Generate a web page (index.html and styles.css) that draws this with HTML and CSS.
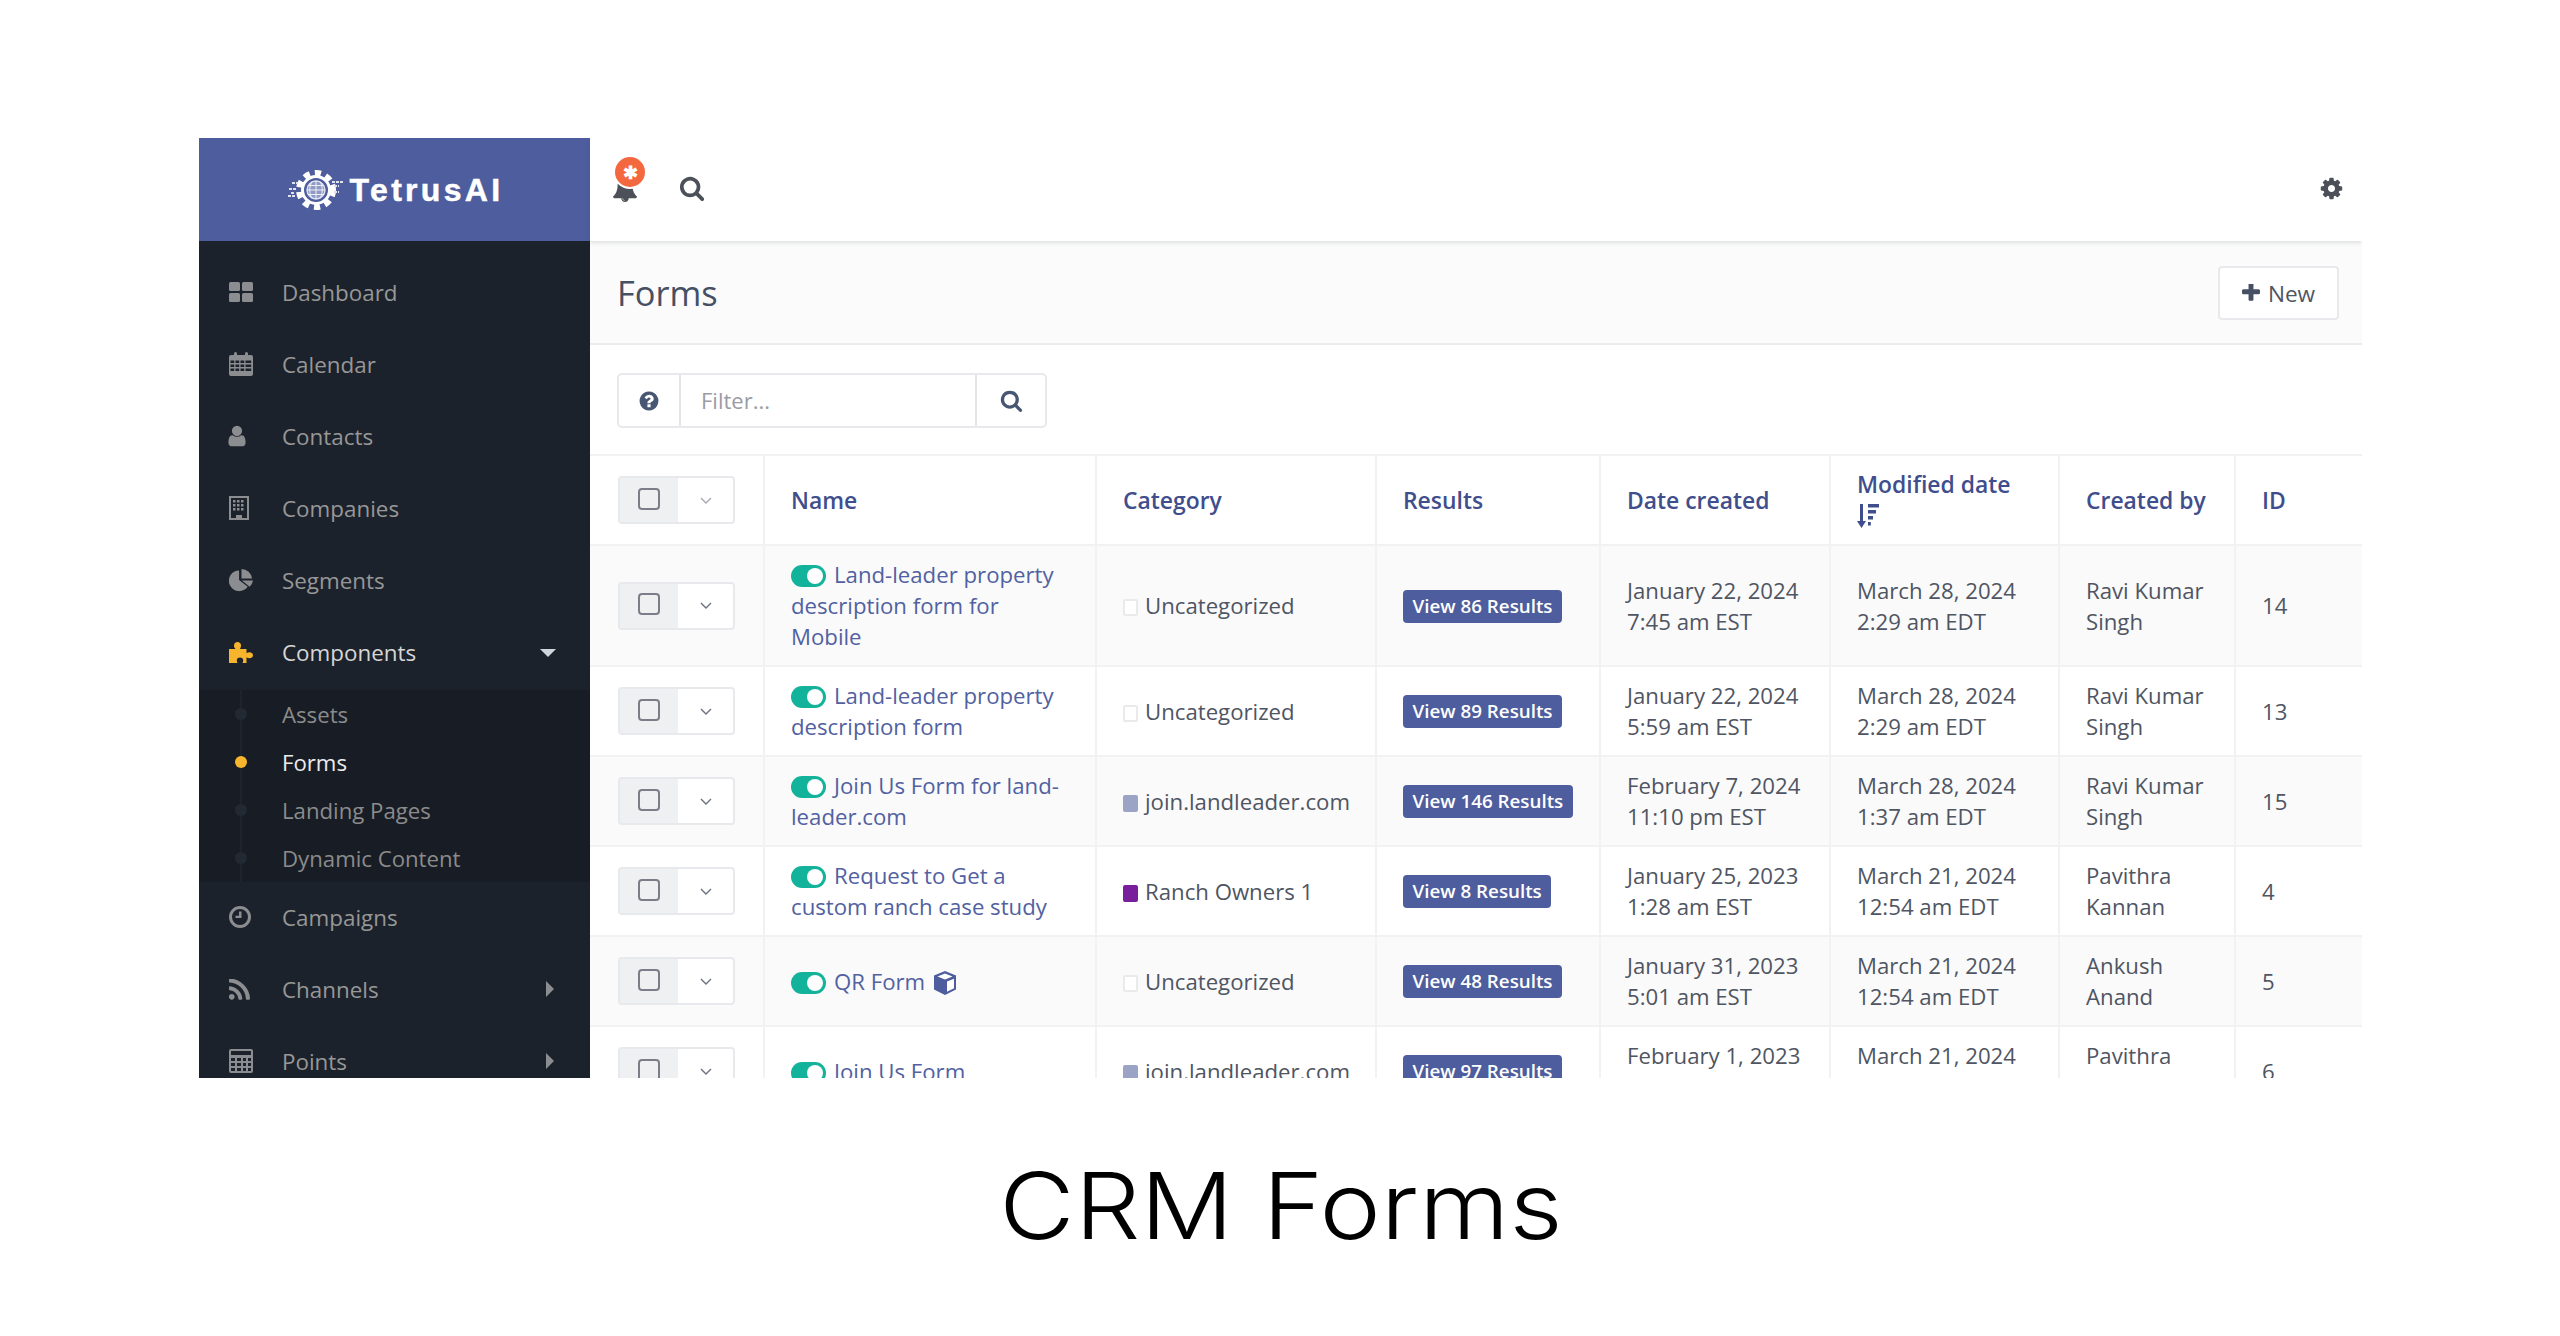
FILE: index.html
```html
<!DOCTYPE html>
<html lang="en">
<head>
<meta charset="utf-8">
<title>CRM Forms</title>
<link rel="stylesheet" href="styles.css">
</head>
<body>
<svg class="sprite" aria-hidden="true">
  <symbol id="i-search" viewBox="0 0 1792 1792"><path d="M1216 832q0-185-131.500-316.500t-316.500-131.500-316.500 131.500-131.500 316.500 131.500 316.500 316.500 131.500 316.500-131.500 131.500-316.500zm512 832q0 52-38 90t-90 38q-54 0-90-38l-343-342q-179 124-399 124-143 0-273.500-55.500t-225-150-150-225-55.500-273.500 55.500-273.500 150-225 225-150 273.500-55.500 273.500 55.500 225 150 150 225 55.500 273.500q0 220-124 399l343 343q37 37 37 90z"/></symbol>
  <symbol id="i-cog" viewBox="0 0 1792 1792"><path d="M1152 896q0-106-75-181t-181-75-181 75-75 181 75 181 181 75 181-75 75-181zm512-109v222q0 12-8 23t-20 13l-185 28q-19 54-39 91 35 50 107 138 10 12 10 25t-9 23q-27 37-99 108t-94 71q-12 0-26-9l-138-108q-44 23-91 38-16 136-29 186-7 28-36 28h-222q-14 0-24.500-8.500t-11.500-21.500l-28-184q-49-16-90-37l-141 107q-10 9-25 9-14 0-25-11-126-114-165-168-7-10-7-23 0-12 8-23 15-21 51-66.500t54-70.500q-27-50-41-99l-183-27q-13-2-21-12.500t-8-23.500v-222q0-12 8-23t19-13l186-28q14-46 39-92-40-57-107-138-10-12-10-24 0-10 9-23 26-36 98.500-107.500t94.500-71.500q13 0 26 10l138 107q44-23 91-38 16-136 29-186 7-28 36-28h222q14 0 24.500 8.500t11.500 21.500l28 184q49 16 90 37l142-107q9-9 24-9 13 0 25 10 129 119 165 170 7 8 7 22 0 12-8 23-15 21-51 66.500t-54 70.500q26 50 41 98l183 28q13 2 21 12.500t8 23.500z"/></symbol>
  <symbol id="i-help" viewBox="0 0 1792 1792"><path d="M1024 1376v-192q0-14-9-23t-23-9h-192q-14 0-23 9t-9 23v192q0 14 9 23t23 9h192q14 0 23-9t9-23zm256-672q0-88-55.500-163t-138.500-116-170-41q-243 0-371 213-15 24 8 42l132 100q7 6 19 6 16 0 25-12 53-68 86-92 34-24 86-24 48 0 85.500 26t37.500 59q0 38-20 61t-68 45q-63 28-115.500 86.500t-52.500 125.500v36q0 14 9 23t23 9h192q14 0 23-9t9-23q0-19 21.500-49.500t54.500-49.500q32-18 49-28.500t46-35 44.500-48 28-60.500 12.500-81zm384 192q0 209-103 385.500t-279.500 279.500-385.500 103-385.500-103-279.500-279.500-103-385.500 103-385.500 279.500-279.500 385.500-103 385.500 103 279.500 279.500 103 385.500z"/></symbol>
  <symbol id="i-dash" viewBox="0 0 24 20"><rect x="0" y="0" width="11" height="9" rx="1.500"/><rect x="13" y="0" width="11" height="9" rx="1.500"/><rect x="0" y="11" width="11" height="9" rx="1.500"/><rect x="13" y="11" width="11" height="9" rx="1.500"/></symbol>
  <symbol id="i-cal" viewBox="0 0 24 24"><path fill-rule="evenodd" d="M2 3h3V1.500a1.500 1.500 0 0 1 3 0V3h8V1.500a1.500 1.500 0 0 1 3 0V3h3a2 2 0 0 1 2 2v17a2 2 0 0 1-2 2H2a2 2 0 0 1-2-2V5a2 2 0 0 1 2-2zM1.500 8.500V11h3.700V8.500zm5 0V11h3.700V8.500zm5 0V11h3.700V8.500zm5 0V11h5.700V8.500zM1.500 12.500V15h3.700v-2.500zm5 0V15h3.700v-2.500zm5 0V15h3.700v-2.500zm5 0V15h5.700v-2.500zM1.500 16.500V19h3.700v-2.500zm5 0V19h3.700v-2.500zm5 0V19h3.700v-2.500zm5 0V19h5.700v-2.500z"/></symbol>
  <symbol id="i-user" viewBox="0 0 1792 1792"><path d="M1536 1399q0 109-62.500 187t-150.500 78h-854q-88 0-150.500-78t-62.500-187q0-85 8.500-160.500t31.500-152 58.500-131 94-89 134.500-34.500q131 128 313 128t313-128q76 0 134.500 34.500t94 89 58.500 131 31.500 152 8.500 160.500zm-256-887q0 159-112.500 271.500t-271.500 112.500-271.500-112.500-112.500-271.500 112.500-271.500 271.500-112.500 271.500 112.500 112.500 271.500z"/></symbol>
  <symbol id="i-build" viewBox="0 0 20 24"><path fill-rule="evenodd" d="M0 0h20v24H0zM2 2v20h5v-3h6v3h5V2zM4 4h2.500v2.500H4zm4 0h2.500v2.500H8zm4 0h2.500v2.500H12zM4 8h2.500v2.500H4zm4 0h2.500v2.500H8zm4 0h2.500v2.500H12zM4 12h2.500v2.500H4zm4 0h2.500v2.500H8zm4 0h2.500v2.500H12z"/></symbol>
  <symbol id="i-pie" viewBox="0 0 25 23"><path d="M10.500 1.500A10.800 10.800 0 1 0 19.500 18.500L10.500 11.500z"/><path d="M13 0a11 11 0 0 1 11 10H13z"/><path d="M13.500 12H25a11 11 0 0 1-3.600 6.500z"/></symbol>
  <symbol id="i-puzzle" viewBox="0 0 24 22"><path d="M0 7h6.500C5 5 5 4.500 5 3.500 5 1.500 6.500 0 8.500 0S12 1.500 12 3.500c0 1-.3 1.800-1 3.500h6.500v4.200c1-.7 1.700-1 2.800-1 2 0 3.700 1 3.700 3s-1.700 3-3.700 3c-1.100 0-1.800-.3-2.800-1V21h-4c.4-1 .7-1.600.7-2.700 0-1.800-1.400-2.800-3.200-2.800s-3.200 1-3.200 2.800c0 1.100.3 1.700.7 2.700H0z"/></symbol>
  <symbol id="i-clock" viewBox="0 0 22 22"><path fill-rule="evenodd" d="M11 0a11 11 0 1 1 0 22 11 11 0 0 1 0-22zm0 3a8 8 0 1 0 0 16 8 8 0 0 0 0-16zM10 5.500h2.500V12H6.500V9.800H10z"/></symbol>
  <symbol id="i-rss" viewBox="200 180 1400 1360"><path d="M576 1344q0 80-56 136t-136 56-136-56-56-136 56-136 136-56 136 56 56 136zm512 123q2 28-17 48-18 21-47 21h-135q-25 0-43-16.500t-20-41.500q-22-229-184.500-391.500t-391.500-184.500q-25-2-41.500-20t-16.500-43v-135q0-29 21-47 17-17 43-17h5q160 13 306 80.500t259 181.500q114 113 181.500 259t80.500 306zm512 2q2 27-18 47-18 20-46 20h-143q-26 0-44.500-17.500t-19.500-42.500q-12-215-101-408.500t-231.500-336-336-231.500-408.500-102q-25-1-42.500-19.500t-17.500-43.500v-143q0-28 20-46 18-18 44-18h3q262 13 501.500 120t425.500 294q187 186 294 425.500t120 501.500z"/></symbol>
  <symbol id="i-calc" viewBox="0 0 24 24"><path fill-rule="evenodd" d="M2 0h20a2 2 0 0 1 2 2v20a2 2 0 0 1-2 2H2a2 2 0 0 1-2-2V2a2 2 0 0 1 2-2zm0 2v4h20V2zm0 7v3h4V9zm6 0v3h4V9zm6 0v3h3V9zm5 0v3h3V9zM2 14v3h4v-3zm6 0v3h4v-3zm6 0v3h3v-3zm5 0v3h3v-3zM2 19v3h4v-3zm6 0v3h4v-3zm6 0v3h3v-3zm5 0v3h3v-3z"/></symbol>
  <symbol id="i-plus" viewBox="192 224 1408 1408"><path d="M1600 736v192q0 40-28 68t-68 28h-416v416q0 40-28 68t-68 28h-192q-40 0-68-28t-28-68v-416h-416q-40 0-68-28t-28-68v-192q0-40 28-68t68-28h416v-416q0-40 28-68t68-28h192q40 0 68 28t28 68v416h416q40 0 68 28t28 68z"/></symbol>
  <symbol id="i-bell" viewBox="64 128 1664 1664"><path d="M912 1696q0-16-16-16-59 0-101.500-42.500t-42.500-101.500q0-16-16-16t-16 16q0 73 51.500 124.500t124.500 51.500q16 0 16-16zm816-288q0 52-38 90t-90 38h-448q0 106-75 181t-181 75-181-75-75-181h-448q-52 0-90-38t-38-90q50-42 91-88t85-119.500 74.500-158.500 50-206 19.500-260q0-152 117-282.500t307-158.500q-8-19-8-39 0-40 28-68t68-28 68 28 28 68q0 20-8 39 190 28 307 158.500t117 282.500q0 139 19.500 260t50 206 74.500 158.500 85 119.500 91 88z"/></symbol>
  <symbol id="i-chev" viewBox="0 0 12 7"><path d="M1 1l5 5 5-5" fill="none" stroke="currentColor" stroke-width="1.400"/></symbol>
  <symbol id="i-cube" viewBox="0 0 22 24"><path d="M11 0l11 4.500v14L11 24 0 18.500v-14z"/><path d="M11 2.500l7.500 3L11 8.600 3.500 5.500zM13 10.500l7-2.800v9.500l-7 3.500z" fill="#fff"/></symbol>
  <symbol id="i-sort" viewBox="0 0 22 24"><path d="M3 0h3v17h3l-4.500 7L0 17h3zM11 0h11v3.500H11zM11 6h8v3.500h-8zM11 12h5v3.500h-5zM11 18h2.800v3.500H11z"/></symbol>
</svg>

<main class="shot">
  <div class="app">
    <aside class="sidebar">
      <div class="brand">
        <svg class="brand-mark" viewBox="0 0 56 40" aria-hidden="true">
          <circle class="gear-teeth" cx="28" cy="20" r="17"/>
          <circle class="gear-ring" cx="28" cy="20" r="13.500"/>
          <circle class="globe" cx="28" cy="20" r="9"/>
          <path class="globe-lines" d="M19 20h18M20 15.500h16M20 24.500h16M28 11v18M24 11.500c-3 5-3 12 0 17M32 11.500c3 5 3 12 0 17"/>
          <path class="streaks" d="M1 19h8M4 13h6M0 26h7M3 23h4M44 12h11M46 16h5M46 22h5"/>
        </svg>
        <span class="brand-name">TetrusAI</span>
      </div>
      <nav class="nav">
        <a class="nav-item"><span class="nav-ico"><svg class="ico-dash"><use href="#i-dash"/></svg></span>Dashboard</a>
        <a class="nav-item"><span class="nav-ico"><svg class="ico-24"><use href="#i-cal"/></svg></span>Calendar</a>
        <a class="nav-item"><span class="nav-ico"><svg class="ico-user"><use href="#i-user"/></svg></span>Contacts</a>
        <a class="nav-item"><span class="nav-ico"><svg class="ico-build"><use href="#i-build"/></svg></span>Companies</a>
        <a class="nav-item"><span class="nav-ico"><svg class="ico-24"><use href="#i-pie"/></svg></span>Segments</a>
        <a class="nav-item is-open"><span class="nav-ico"><svg class="ico-24"><use href="#i-puzzle"/></svg></span>Components<span class="caret-down"></span></a>
        <div class="subnav">
          <a class="sub-item"><span class="dot"></span>Assets</a>
          <a class="sub-item is-active"><span class="dot"></span>Forms</a>
          <a class="sub-item"><span class="dot"></span>Landing Pages</a>
          <a class="sub-item"><span class="dot"></span>Dynamic Content</a>
        </div>
        <a class="nav-item"><span class="nav-ico"><svg class="ico-22"><use href="#i-clock"/></svg></span>Campaigns</a>
        <a class="nav-item"><span class="nav-ico"><svg class="ico-rss"><use href="#i-rss"/></svg></span>Channels<span class="caret-right"></span></a>
        <a class="nav-item"><span class="nav-ico"><svg class="ico-24"><use href="#i-calc"/></svg></span>Points<span class="caret-right"></span></a>
      </nav>
    </aside>

    <section class="main">
      <header class="topbar">
        <span class="bell">
          <svg class="ico-bell"><use href="#i-bell"/></svg>
          <span class="badge">✱</span>
        </span>
        <svg class="ico-top-search"><use href="#i-search"/></svg>
        <svg class="ico-gear"><use href="#i-cog"/></svg>
      </header>
      <div class="pagehead">
        <h1 class="title">Forms</h1>
        <button class="btn-new"><svg class="ico-plus"><use href="#i-plus"/></svg>New</button>
      </div>
      <div class="filterbar">
        <div class="filter">
          <span class="filter-addon help"><svg class="ico-help"><use href="#i-help"/></svg></span>
          <span class="filter-input">Filter...</span>
          <span class="filter-addon go"><svg class="ico-search"><use href="#i-search"/></svg></span>
        </div>
      </div>
      <table class="grid">
        <colgroup>
          <col class="c-check"><col class="c-name"><col class="c-cat"><col class="c-res"><col class="c-date"><col class="c-mod"><col class="c-by"><col class="c-id">
        </colgroup>
        <thead>
          <tr>
            <th class="check-cell"><span class="check-group head"><span class="check-box"><i></i></span><span class="check-menu"><svg class="ico-chev"><use href="#i-chev"/></svg></span></span></th>
            <th>Name</th>
            <th>Category</th>
            <th>Results</th>
            <th>Date created</th>
            <th>Modified date<svg class="ico-sort"><use href="#i-sort"/></svg></th>
            <th>Created by</th>
            <th>ID</th>
          </tr>
        </thead>
        <tbody>
          <tr>
            <td class="check-cell"><span class="check-group"><span class="check-box"><i></i></span><span class="check-menu"><svg class="ico-chev"><use href="#i-chev"/></svg></span></span></td>
            <td><span class="toggle"></span><a class="link">Land-leader property description form for Mobile</a></td>
            <td class="cat"><span class="swatch"></span>Uncategorized</td>
            <td><a class="results">View 86 Results</a></td>
            <td class="when">January 22, 2024<br>7:45 am EST</td>
            <td class="when">March 28, 2024<br>2:29 am EDT</td>
            <td>Ravi Kumar Singh</td>
            <td>14</td>
          </tr>
          <tr>
            <td class="check-cell"><span class="check-group"><span class="check-box"><i></i></span><span class="check-menu"><svg class="ico-chev"><use href="#i-chev"/></svg></span></span></td>
            <td><span class="toggle"></span><a class="link">Land-leader property description form</a></td>
            <td class="cat"><span class="swatch"></span>Uncategorized</td>
            <td><a class="results">View 89 Results</a></td>
            <td class="when">January 22, 2024<br>5:59 am EST</td>
            <td class="when">March 28, 2024<br>2:29 am EDT</td>
            <td>Ravi Kumar Singh</td>
            <td>13</td>
          </tr>
          <tr>
            <td class="check-cell"><span class="check-group"><span class="check-box"><i></i></span><span class="check-menu"><svg class="ico-chev"><use href="#i-chev"/></svg></span></span></td>
            <td><span class="toggle"></span><a class="link">Join Us Form for land-leader.com</a></td>
            <td class="cat"><span class="swatch join"></span>join.landleader.com</td>
            <td><a class="results">View 146 Results</a></td>
            <td class="when">February 7, 2024<br>11:10 pm EST</td>
            <td class="when">March 28, 2024<br>1:37 am EDT</td>
            <td>Ravi Kumar Singh</td>
            <td>15</td>
          </tr>
          <tr>
            <td class="check-cell"><span class="check-group"><span class="check-box"><i></i></span><span class="check-menu"><svg class="ico-chev"><use href="#i-chev"/></svg></span></span></td>
            <td><span class="toggle"></span><a class="link">Request to Get a custom ranch case study</a></td>
            <td class="cat"><span class="swatch ranch"></span>Ranch Owners 1</td>
            <td><a class="results">View 8 Results</a></td>
            <td class="when">January 25, 2023<br>1:28 am EST</td>
            <td class="when">March 21, 2024<br>12:54 am EDT</td>
            <td>Pavithra Kannan</td>
            <td>4</td>
          </tr>
          <tr>
            <td class="check-cell"><span class="check-group"><span class="check-box"><i></i></span><span class="check-menu"><svg class="ico-chev"><use href="#i-chev"/></svg></span></span></td>
            <td><span class="toggle"></span><a class="link">QR Form</a><svg class="ico-cube"><use href="#i-cube"/></svg></td>
            <td class="cat"><span class="swatch"></span>Uncategorized</td>
            <td><a class="results">View 48 Results</a></td>
            <td class="when">January 31, 2023<br>5:01 am EST</td>
            <td class="when">March 21, 2024<br>12:54 am EDT</td>
            <td>Ankush Anand</td>
            <td>5</td>
          </tr>
          <tr>
            <td class="check-cell"><span class="check-group"><span class="check-box"><i></i></span><span class="check-menu"><svg class="ico-chev"><use href="#i-chev"/></svg></span></span></td>
            <td><span class="toggle"></span><a class="link">Join Us Form</a></td>
            <td class="cat"><span class="swatch join"></span>join.landleader.com</td>
            <td><a class="results">View 97 Results</a></td>
            <td class="when">February 1, 2023<br>&nbsp;</td>
            <td class="when">March 21, 2024<br>&nbsp;</td>
            <td>Pavithra Kannan</td>
            <td>6</td>
          </tr>
        </tbody>
      </table>
    </section>
  </div>
  <h2 class="caption">CRM Forms</h2>
</main>
</body>
</html>
```

FILE: styles.css
```css
* { box-sizing: border-box; }
html, body { margin: 0; padding: 0; background: #fff; }
body { width: 2560px; height: 1336px; overflow: hidden; font-family: "Open Sans", "Liberation Sans", sans-serif; }
.sprite { display: none; }
svg { fill: currentColor; display: inline-block; }

.shot { padding: 138px 198px 0 199px; }
.app { display: grid; grid-template-columns: 391px 1772px; height: 940px; overflow: hidden; background: #fff; }

/* sidebar */
.sidebar { background: #1c222b; color: #979797; font-size: 22.4px; }
.brand { height: 103px; background: #4e5d9d; display: flex; align-items: center; justify-content: center; gap: 6px; padding-left: 2px; }
.brand-mark { width: 56px; height: 40px; fill: none; color: #fff; }
.gear-teeth { stroke: #fff; stroke-width: 6; stroke-dasharray: 6.200 5; }
.gear-ring { stroke: #fff; stroke-width: 3; }
.globe { stroke: #dfe3f0; stroke-width: 1.400; fill: #8f9ac6; }
.globe-lines { stroke: #eef0f7; stroke-width: 1; }
.streaks { stroke: #dfe3f0; stroke-width: 1.800; stroke-dasharray: 3 1; }
.brand-name { color: #fff; font-family: "Liberation Sans", Arial, sans-serif; font-weight: 700; font-size: 32px; letter-spacing: 3.300px; line-height: 1; -webkit-text-stroke: .5px #fff; }

.nav { padding-top: 16px; display: flex; flex-direction: column; }
.nav-item { height: 72px; display: flex; align-items: center; padding: 0 34px 2px 30px; color: #979797; }
.nav-ico { width: 24px; margin-right: 29px; display: flex; align-items: center; color: #8b8d91; flex: none; }
.is-open { color: #d6d6d6; height: 73px; }
.is-open .nav-ico { color: #f6b52d; }
.ico-dash { width: 24px; height: 20px; }
.ico-24 { width: 24px; height: 24px; }
.ico-22 { width: 22px; height: 22px; }
.ico-user { width: 24px; height: 24px; margin-left: -4px; }
.ico-build { width: 20px; height: 24px; }
.ico-rss { width: 21px; height: 21px; }
.caret-down { margin-left: auto; width: 0; height: 0; border-left: 8px solid transparent; border-right: 8px solid transparent; border-top: 8px solid #d0d4dc; }
.caret-right { margin-left: auto; margin-right: 2px; width: 0; height: 0; border-top: 8px solid transparent; border-bottom: 8px solid transparent; border-left: 8px solid #8b8d91; }

.subnav { position: relative; background: #181d25; height: 192px; display: flex; flex-direction: column; }
.subnav::before { content: ""; position: absolute; left: 41px; top: 0; bottom: 0; width: 2px; background: #1e242d; }
.sub-item { position: relative; height: 48px; display: flex; align-items: center; padding-left: 36px; color: #8b8b8b; font-size: 22.2px; }
.dot { width: 12px; height: 12px; border-radius: 50%; background: #232933; margin-right: 35px; flex: none; }
.is-active { color: #ececec; }
.is-active .dot { background: #f6b52d; }

/* top bar */
.main { min-width: 0; color: #4f5562; font-size: 22.2px; }
.topbar { position: relative; z-index: 1; height: 103px; display: flex; align-items: center; padding: 0 18px 0 22px; background: #fff; box-shadow: 0 2px 4px rgba(60, 65, 75, .14); color: #4c5058; }
.bell { position: relative; display: block; width: 26px; height: 24px; }
.ico-bell { width: 26px; height: 24px; display: block; }
.badge { position: absolute; left: 3px; top: -21px; width: 30px; height: 30px; border-radius: 50%; background: #f4683f; color: #fff; font-size: 18px; font-weight: 700; line-height: 30px; text-align: center; box-shadow: 0 0 0 2px #fff; }
.ico-top-search { width: 26px; height: 26px; margin: -4px 0 0 41px; }
.ico-gear { width: 25px; height: 25px; margin: -3px 0 0 auto; }

/* page head */
.pagehead { height: 104px; display: flex; align-items: center; justify-content: space-between; padding: 2px 23px 0 27px; background: #fbfbfb; border-bottom: 2px solid #ebecee; }
.title { margin: 0 0 2px; font-size: 34.4px; font-weight: 400; color: #465065; }
.btn-new { height: 54px; width: 121px; display: flex; align-items: center; justify-content: center; gap: 8px; background: #fff; border: 2px solid #e8e9ec; border-radius: 4px; font: 400 22.6px "Open Sans", sans-serif; color: #4f5562; padding: 0; }
.ico-plus { width: 18px; height: 18px; color: #465065; }

/* filter */
.filterbar { height: 109px; padding: 28px 0 0 27px; }
.filter { width: 430px; height: 55px; display: flex; border: 2px solid #e8e9ec; border-radius: 5px; background: #fff; }
.filter-addon { display: flex; align-items: center; justify-content: center; color: #475673; flex: none; }
.help { width: 62px; border-right: 2px solid #e3e4e7; }
.go { flex: 1; border-left: 2px solid #e3e4e7; }
.filter-input { width: 294px; display: flex; align-items: center; padding: 0 0 2px 20px; color: #9a9ba3; font-size: 22px; }
.ico-help { width: 22px; height: 22px; }
.ico-search { width: 23px; height: 23px; }

/* table */
.grid { width: 1772px; table-layout: fixed; border-collapse: collapse; border-top: 2px solid #f1f2f3; }
.c-check { width: 174px; }
.c-name { width: 332px; }
.c-cat { width: 280px; }
.c-res { width: 224px; }
.c-date { width: 230px; }
.c-mod { width: 229px; }
.c-by { width: 176px; }
.c-id { width: 127px; }
.grid th, .grid td { padding: 13px 27px 13px 26px; text-align: left; vertical-align: middle; line-height: 31px; border-left: 2px solid #f1f2f3; border-bottom: 2px solid #f1f2f3; }
.grid th:first-child, .grid td:first-child { border-left: 0; }
.grid th { height: 90px; font-size: 22.9px; font-weight: 600; color: #3f4e8c; padding-top: 12px; padding-bottom: 12px; }
.grid tbody tr:nth-child(odd) { background: #fafafa; }
.grid .check-cell { padding: 0 0 0 28px; }
.grid .cat { white-space: nowrap; padding-right: 8px; }
.grid .when { white-space: nowrap; padding-right: 8px; }

.check-group { display: flex; width: 117px; height: 48px; border: 2px solid #e8e9ec; border-radius: 4px; background: #fff; }
.check-box { width: 58px; background: #eef0f2; display: flex; align-items: center; justify-content: center; }
.check-box i { display: block; width: 22px; height: 22px; border: 2px solid #7b7e88; border-radius: 4px; margin-top: -3px; }
.check-menu { flex: 1; display: flex; align-items: center; justify-content: center; color: #6a7080; }
.ico-chev { width: 12px; height: 7px; }
.head .check-menu { color: #a4a8b2; }

.toggle { position: relative; display: inline-block; width: 35px; height: 22px; margin-right: 8px; border-radius: 11px; background: #12b39a; vertical-align: -4px; }
.toggle::after { content: ""; position: absolute; right: 3px; top: 3px; width: 16px; height: 16px; border-radius: 50%; background: #fff; }
.link { color: #5161a1; }
.ico-cube { width: 22px; height: 24px; margin-left: 9px; color: #4e5d9d; vertical-align: -5px; }
.ico-sort { display: block; width: 22px; height: 24px; margin: 4px 0 3px; }
.swatch { display: inline-block; width: 15px; height: 17px; margin-right: 7px; border: 2px solid #e9eaec; border-radius: 2px; background: #fff; vertical-align: -2px; }
.swatch.join { background: #9ba4c4; border-color: #9ba4c4; }
.swatch.ranch { background: #7a1f9c; border-color: #7a1f9c; }
.results { display: inline-block; height: 33px; padding: 0 9.5px; border-radius: 4px; background: #4e5d9d; color: #fff; font-size: 18.8px; font-weight: 600; line-height: 33px; vertical-align: middle; white-space: nowrap; }

/* caption */
.caption { width: 520px; margin: 73px auto 0; text-align: center; white-space: nowrap; font-family: Inter, "Liberation Sans", sans-serif; font-weight: 300; font-size: 92px; line-height: 110px; color: #000; transform: scaleX(1.125); }
```
